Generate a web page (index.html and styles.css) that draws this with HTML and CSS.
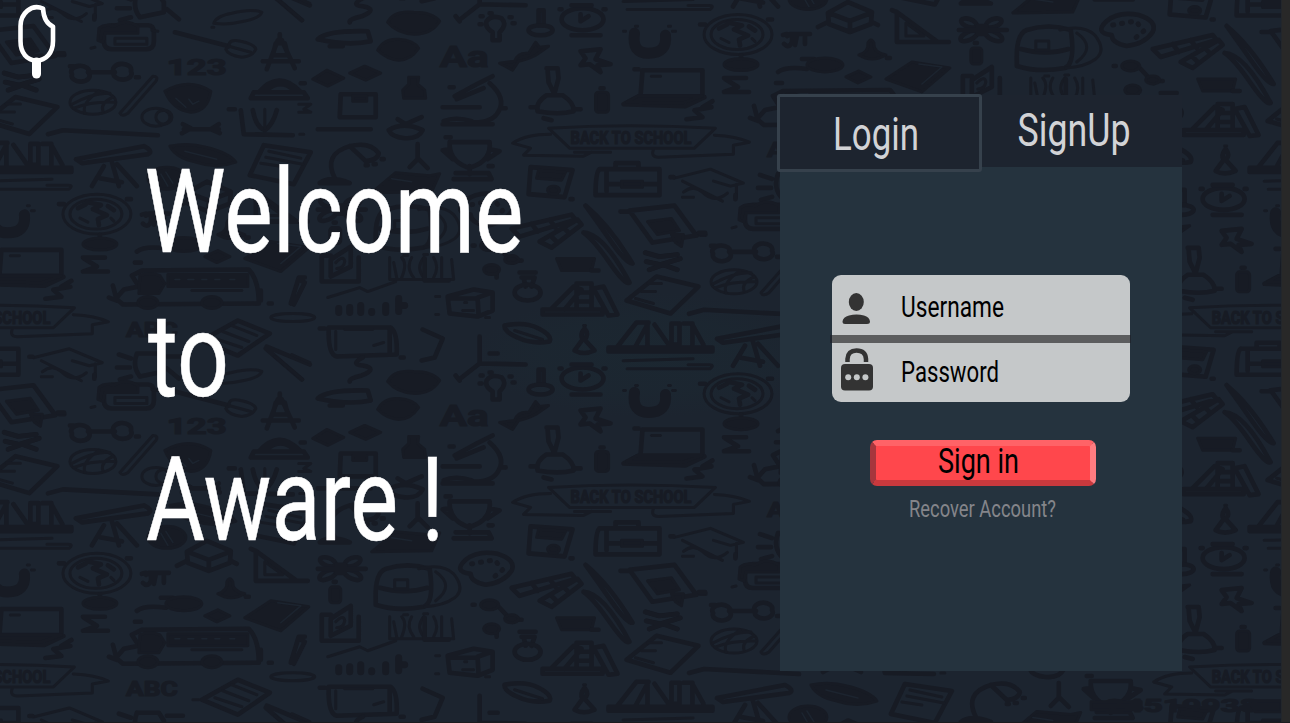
FILE: index.html
```
<!DOCTYPE html>
<html lang="en">
<head>
<meta charset="utf-8">
<title>Aware</title>
<link rel="stylesheet" href="styles.css">
</head>
<body>
<div class="page">
<svg class="backdrop" viewBox="0 0 1282 722" aria-hidden="true">
  <defs>
    <g id="tile" class="doodle">
      <path class="thick" d="M104 33q0-8 8-8h36q6 0 6 8v8q0 8-8 8h-34q-8 0-8-8z"/><path class="solid" d="M114 26q12-8 24 0v7h-33l-2 9-5-2 1-12q6-5 15-2z"/><path d="M115 38h32v6h-32zM91 48l4-1M152 30l6 1"/>
      <path class="thick" d="M175 32l54 14"/><path d="M229 46q0-8 12-5 14 3 15 8-3 7-14 8-14-2-16-8zl22 6"/>
      <path d="M214 23q2-7 18-10 20-5 30-1-2 6-18 9-16 4-30 2M212 27h2M275-3l28 23M292-5l18 8"/>
      <path class="thick" d="M280 34v8M278 40l-11 29M282 40l13 28M263 61h36M276 43h9l3 12h-15z"/>
      <path class="thick" d="M72 74a9 6 0 1 0 17-1 9 6 0 1 0-17 1M114 72a9 6 0 1 0 17-1 9 6 0 1 0-17 1M88 72h27M70 66h4M136 77h3"/>
      <ellipse cx="93" cy="102" rx="23" ry="12"/><path d="M72 104q22-12 38-11M74 108q18-7 41-6M85 113q-4-10 14-22M103 111q-3-8 10-14"/>
      <path d="M153 76q6 0 3 5l-28 32q-6 4-8 0z"/><ellipse cx="156" cy="117" rx="14" ry="9"/><ellipse cx="164" cy="117" rx="8" ry="7"/>
      <path class="solid" d="M165 91q24-14 46 0-3 20-20 21-18-2-26-21"/><path class="gap" d="M176 98l10 9M189 99l4 5 6-3"/>
      <path class="thick" d="M184 129h35M183 124l8 4-9 5M219 124l-8 5 9 4M48 134l15-4 95 5"/>
      <path class="thick" d="M251 98h57l-4-6h-50zM259 92q20-23 41-1M267 90q14-12 27 0M301 83h4M318 129h53"/>
      <path class="thick" d="M341 94h35v23h-36z"/><path class="solid" d="M353 96h14v5h-14z"/>
      <path class="thick" d="M241 110l3 24 49 1M229 109h6"/><path class="thick" d="M253 110q3 17 12 20 8-5 12-20"/><path d="M265 109v19M299 104h12l-7 5 7 3h-12M300 134h4"/>
      <path class="thick" d="M76 159l68-13q10 5 4 8l-66 9zM104 166l-12 20M112 162l7 24M117 164l20 22M100 178l22 4"/>
      <path d="M-18 181l70-2M-14 189h83q5-4-1-4H47"/>
      <ellipse cx="97" cy="214" rx="34" ry="20"/><ellipse cx="96" cy="214" rx="26" ry="15"/><path class="thick" d="M78 208l8-4M87 202l14 3-8 4 14 6-9 4 1 6M108 206l6 4M100 235v7M59 204h5M127 199h4"/><path d="M80 218l8 4M111 218l3 3"/><ellipse class="solid" cx="100" cy="244" rx="17" ry="6"/>
      <path class="solid" d="M170 146q18-4 36 1 24 6 30 15-20 7-40 0-20-4-26-16"/><path class="gap" d="M185 151l32 8"/>
      <path class="thick" d="M264 145l47 7-17 32-44-9z"/><path d="M269 151l32 7M266 157l37 7M261 163l20 3"/>
      <path class="thick" d="M335 178q-12-24 15-32M350 146l16 15q12-1 13-8-9-12-29-7M320 183q10-8 30 0zM366 165h2M374 164h2M382 159h2"/>
      <path class="thick" d="M318 39q9-9 50-8l3 10q-22 5-53-2M330 46h13"/><path class="solid" d="M388 22q6-12 26-10 19 0 26 9-8 13-25 13-18-1-27-12M378 50q6-12 21-11 15 1 20 9-8 12-20 12-12-1-21-10M313 79l14-9 17 8-16 8zM350 73l15-7 16 7-15 7z"/>
      <path class="thick" d="M363-2q-13 7 0 8 16 3-1 10-13 3-12 6"/><path class="solid" d="M409 77h10l-1 7 7 6 1 8h-22l-1-8 6-6z"/><path class="thick" d="M389 130q15-9 34 0-4 9-18 8-13-1-16-8M398 119l8 5 16-7M418 144v16M418 159l-8 8M418 158l10 10"/>
      <path class="thick" d="M4 73l14 4 18-2M5 82l14 3 20-6M8 90l14-5 14 5M58 53h6"/>
      <ellipse class="solid" cx="167" cy="178" rx="19" ry="11"/><path class="gap" d="M161 174l7 12M166 172l7 11"/>
      <g transform="translate(0 -359.5)">
        <path class="thick" d="M187 552l20-11 24 10-1 12-21 8-21-8zM188 552l21 8 21-8M209 560v11M177 566l10-5M231 561l6 3"/>
        <path class="thick" d="M256 551v30h41zM251 549l5 2M297 581h11"/><path d="M265 562v13h18z"/>
        <path class="thick" d="M142 574l4-1M146 575q6-4 5 6-3 7-8 2M149 573h20M156 574l-2 10M164 574v9"/>
        <ellipse class="thick" cx="328" cy="562" rx="8" ry="4" transform="rotate(20 328 562)"/><ellipse class="thick" cx="353" cy="562" rx="8" ry="4" transform="rotate(-20 353 562)"/><ellipse class="thick" cx="328" cy="575" rx="9" ry="4" transform="rotate(-25 328 575)"/><ellipse class="thick" cx="353" cy="575" rx="9" ry="4" transform="rotate(25 353 575)"/><path class="thick" d="M318 569h48M337 565h8v8h-8z"/>
        <path class="thick" d="M376 600q-1-27 10-31 22-7 44 0 5 34-6 38-26 5-48-2zM380 588q25 7 48 0"/><path d="M395 580h13v9h-13zM419 569q24-6 35 5 12 15 1 24-11 8-30 9M436 572q20 14 0 29"/>
        <path class="solid" d="M218 594q10-3 9-12 3-6 6 0-1 9 12 12-14 8-27 0"/><path class="thick" d="M246 597h3M334 582h2M137 611q8-6 29-3M161 598h12"/><rect class="solid" x="330" y="587" width="11" height="16" rx="3"/><ellipse class="solid" cx="184" cy="604" rx="18" ry="7"/><path class="solid" d="M205 616l13-6 12 6-13 6zM245 618l26-17 38 6-28 24z"/><path class="gap" d="M278 603l23 3-20 17"/>
        <path class="thick" d="M331 615h-9v26h37v-24M331 636v-17l20-13v20z"/><path d="M336 622q8-8 9-1-1 7-8 7M394 622l3 15M390 617v22h64l-2-20M402 617q6 6 0 20M412 617q-6 10 2 20M424 617q-8 10 0 20M434 617q6 10 0 20M442 617v20M404 615h4M424 614h4"/>
        <path class="thick" d="M83 617h22M84 618l13 8-14 5h25"/>
        <path class="thick" d="M132 635l10-5 107-1q10 10 10 34l-136 1-7-6 8-9 15-3zM135 622h6M109 657l8 3-4-15M261 650v10M269 663h3"/><path class="solid" d="M140 635q10-4 20 0l5 8-6 10h-20zM168 634h80v12h-80z"/><path class="gap" d="M175 639h5M188 639h6M202 639h5M215 639h5M230 639h5"/><path d="M192 650h50"/><ellipse class="solid" cx="148" cy="662" rx="10" ry="6"/><ellipse class="solid" cx="212" cy="662" rx="10" ry="6"/>
        <path class="thick" d="M305 637l-6 0-8 26M299 639l6 3-11 22"/><ellipse cx="293" cy="677" rx="22" ry="4"/>
        <path d="M328 657l32-10 8 4 28-10"/><path class="bars" d="M339 668v4M350 667v5M361 665v7M372 671v1M386 665v7M399 658v13M402 665h3"/>
        <path class="thick" d="M202 700l36-20 32 13-32 22z"/><path d="M223 691l26 10M232 685l25 10M215 698l27 9M193 700h6"/>
        <path class="thick" d="M329 687h62q7 5 6 27l-60 2q-9-2-8-29M320 688h5M390 688v25M401 717h3"/><path d="M336 691v18M345 689h28M374 705l10-3"/>
        <path class="thick" d="M267 706l43 18M266 708l36 31M119 714l12 4M117 727h13M120 739l11-3M137 713h22l5 8v10l-24 5q-8-10-3-23M167 716h16M167 728l12 10"/>
        <path class="solid" d="M372 552l24-20 34 3 10-2-8 18z"/><path class="gap" d="M392 538l20 3"/>
        <path class="thick" d="M466 560q12-10 32-6 19 6 14 17-8 12-26 14-15-3-15-11-18-2-5-14"/><path class="dots" d="M472 564l23-4 8 10-12 10"/>
        <path class="thick" d="M512 588l60-14 4 5-56 17zM540 601l38-22 4 5-30 23zM532 583l6 8M550 579l6 8M551 595l6 6M564 587l5 5"/>
        <path class="thick" d="M586 565q24 20 47 58-6 0-20-20T586 565M584 592q20 1 46 50-4 3-20-20T584 592M630 570l45-5 22 30-44 7zM621 571h9M701 594h5"/><path class="solid" d="M648 581l24-3 8 12-22 4zM672 594h12l-2 12-6-4z"/>
        <path class="thick" d="M473 605h2M500 608l13 14M512 620h10M497 634v3"/><ellipse class="solid" cx="490" cy="605" rx="9" ry="5"/><ellipse class="solid" cx="492" cy="629" rx="8" ry="5"/><ellipse class="solid" cx="512" cy="619" rx="7" ry="4"/>
        <path class="solid" d="M557 618h38l-3 12h-30z"/><path class="thick" d="M520 632h16M522 637h13l-3 9M524 637l2 9M425 618v22h24M592 630h7"/><ellipse class="thick" cx="528" cy="652" rx="13" ry="8"/>
        <path class="thick" d="M448 656l26-7 19 3v18l-15 6-28-3zM450 658h28l1 17M478 657l14-5"/><path d="M465 662h2M463 670h11M436 656h4M436 674h3M486 677h4"/>
        <path class="thick" d="M543 669h60v5h-60zM552 668l22-22 8 3-17 20M577 669v-26h15v26M594 648l10-2 14 28-9 1zM580 652h10M580 661h10"/>
        <path class="thick" d="M627 660l30-24 42 10-28 27z"/><path d="M648 643h14M642 651h14M636 658l18 5"/><path class="thick" d="M646 612l14 4 18-2M647 621l14 3 20-6M650 629l14-5 14 5"/>
        <path class="thick" d="M505 685q21-4 34 3 14 7 11 13-18 3-32-4-14-6-13-12"/><path d="M515 690l28 9M584 685h2"/><path class="thick" d="M585 688q5 6 0 11l10 11q-11 5-20 0l8-11q-3-5 2-11"/>
        <path class="thick" d="M609 707h104v4h-104zM618 706l19-24 12 0-13 24M640 682h8v23M655 684l14 20M672 683h8v21h-8zM684 683h9v21M694 686l10 18"/>
        <path class="thick" d="M423 689l20 9-8 19-13 3M480 696v27M462 737l18-14 46 1M490 713h8M456 735l4 5"/>
      </g>
      <path class="thick" d="M487 21q5-7 15-3 6 6-2 14v8h-7v-8q-8-5-6-11M481 16h2M480 24h2M510 17h2M513 23h2M490 13h2M539 10h5v15h-5z"/><ellipse class="thick" cx="541" cy="30" rx="12" ry="5"/>
      <ellipse class="thick" cx="583" cy="19" rx="21" ry="11"/><path class="thick" d="M572 5h20M572 35h29M581 14v7l8-5M560 9h2M604 9h2"/>
      <path class="solid" d="M500 63l15-2q3-9 14-8l7-11 4 5 9-1-13 9q-10 5-17 6l-6 9z"/><path class="thick" d="M581 51l20-2-5 10 15 5-13 1 3 7-11-8-9 1 5-7z"/>
      <path class="thick" d="M443 107h37M444 121q12-5 28 0M455 96l22-12 16-8M457 99l27-11M490 83q17 15 9 28-6 12-27 11M443 124h50M450 87h4M503 108h3"/>
      <path class="thick" d="M547 68h11l1 10-4 15M548 70l1 12 5 10M538 111q-2-9 9-16h16q12 8 11 16-15 4-36 0M535 107h-4M575 109h6M544 118l8 2M601 88h3"/><rect class="solid" x="596" y="92" width="13" height="20" rx="3"/>
      <path d="M624 31h2M636 26h2M669 26h2M673 31h3"/><path class="magnet" d="M635 33q-3 20 14 20 19 0 17-18"/>
      <path class="thick" d="M643 70h60v26h-62zM641 95l-17 9 62 2 19-9M703 72v20M713 101l-10 6M687 119l16-2-8-7 17-3M635 69h4"/><path class="solid" d="M638 96h65l-20 7-56-1z"/><path d="M652 76h9"/>
      <path d="M549 128q80-5 167 0l-21 20H570zM551 134q-25 0-38 9l18 5-7 7 60 1 8-4M715 135q22 1 35 7l-16 3v9l-75 3q-8 0-5-8M575 152h36"/>
      <path class="thick" d="M450 142h40q2 18-18 25h-5q-18-7-17-25M450 149l-7 1 10 9M490 149l10 2-12 8M470 166v8M456 173h33l3 6h-38M446 137h5M489 166h4"/>
      <path class="thick" d="M531 167l42 3-8 27-36-3z"/><path class="solid" d="M539 170l27 2-4 8-25-2z"/><ellipse class="solid" cx="554" cy="190" rx="6" ry="4"/>
      <path class="thick" d="M600 169h60v26h-64q0-23 4-26M609 184h50M616 168v-5h23v4M607 171v20M571 199h2"/><path class="solid" d="M622 181h21v6h-21z"/>
      <path d="M675 178l36-9 33 14-13 3-17-5M683 181l40 20M684 192q10-8 19 0 12 12 25 1M737 184v13M683 197h11"/><path class="thick" d="M736 195v4M674 177h-3"/>
      <text class="scribble" x="167" y="75" font-size="23" textLength="60" lengthAdjust="spacingAndGlyphs">123</text>
      <text class="scribble" x="440" y="67" font-size="30" textLength="49" lengthAdjust="spacingAndGlyphs">Aa</text>
      <text class="scribble" x="126" y="337" font-size="20" textLength="52" lengthAdjust="spacingAndGlyphs">ABC</text>
      <text class="scribble" x="571" y="144" font-size="18" textLength="121" lengthAdjust="spacingAndGlyphs">BACK TO SCHOOL</text>
    </g>
    <g id="column"><use href="#tile" y="-359.5"/><use href="#tile"/><use href="#tile" y="359.5"/><use href="#tile" y="719"/></g>
    <radialGradient id="smudge"><stop offset="0" stop-color="#1b2932" stop-opacity=".55"/><stop offset=".6" stop-color="#1b2932" stop-opacity=".4"/><stop offset="1" stop-color="#1b2932" stop-opacity="0"/></radialGradient>
  </defs>
  <ellipse cx="650" cy="355" rx="175" ry="62" fill="url(#smudge)"/>
  <use href="#column" x="-641.6" y="-179.75"/>
  <use href="#column"/>
  <use href="#column" x="641.6" y="-179.75"/>
  <use href="#column" x="1283.2"/>
  <g class="doodle"><path class="solid" d="M1092 702h50v8h-50zM1250 701h32v11h-26z"/><text class="scribble" x="1106" y="712" font-size="19" textLength="154" lengthAdjust="spacingAndGlyphs">24519938</text></g>
</svg>

<main class="layout">
  <section class="hero">
    <svg class="logo" viewBox="0 0 60 82" aria-label="Aware logo"><path d="M43 8.500C31 3.500 20.500 14 20.500 26V41C20.500 53 27 60.500 36.500 60.500S53 53 53 41V26.500C46 23.500 43.500 17 43 8.500Z" class="logo-pop"/><path d="M36.500 62V74" class="logo-stick"/></svg>
    <svg class="headline" viewBox="0 0 420 410" role="heading" aria-level="1">
      <text x="4.500" y="102" textLength="379" lengthAdjust="spacingAndGlyphs">Welcome</text>
      <text x="8" y="246" textLength="81" lengthAdjust="spacingAndGlyphs">to</text>
      <text x="6" y="390" textLength="298" lengthAdjust="spacingAndGlyphs">Aware !</text>
    </svg>
  </section>

  <section class="card">
    <nav class="tabs">
      <a class="tab tab-active"><svg viewBox="0 0 199 72"><text x="53" y="53" textLength="86" lengthAdjust="spacingAndGlyphs">Login</text></svg></a>
      <a class="tab"><svg viewBox="0 0 200 72"><text x="35.500" y="51" textLength="113" lengthAdjust="spacingAndGlyphs">SignUp</text></svg></a>
    </nav>
    <form class="form">
      <div class="fields">
        <label class="field">
          <svg viewBox="0 0 298 60"><ellipse cx="24.300" cy="27" rx="7.500" ry="9"/><path d="M10.500 46.500Q11 42 17 40.500Q24.500 38.500 32 40.500Q37.500 42 38 46.500Q38 49 35 49H13Q10.500 49 10.500 46.500Z"/><text x="69" y="42" textLength="103" lengthAdjust="spacingAndGlyphs">Username</text></svg>
        </label>
        <div class="divider"></div>
        <label class="field">
          <svg viewBox="0 0 298 59"><path class="shackle" d="M15.500 19V16Q16 7.500 24.500 7.500Q33.500 7.500 34 16V19"/><rect x="9" y="21" width="32" height="26.500" rx="4"/><g class="pin"><circle cx="16.200" cy="34.300" r="3"/><circle cx="24.800" cy="34.300" r="3"/><circle cx="33.400" cy="34.300" r="3"/></g><text x="69" y="39" textLength="98" lengthAdjust="spacingAndGlyphs">Password</text></svg>
        </label>
      </div>
      <button class="submit" type="button"><svg viewBox="0 0 226 46"><text x="68" y="33" textLength="81" lengthAdjust="spacingAndGlyphs">Sign in</text></svg></button>
      <a class="recover"><svg viewBox="0 0 160 30"><text x="6" y="22" textLength="147" lengthAdjust="spacingAndGlyphs">Recover Account?</text></svg></a>
    </form>
  </section>
</main>
</div>
</body>
</html>
```

FILE: styles.css
```
* { box-sizing: border-box; }
body { margin: 0; background: #282828; overflow: hidden; font-family: Roboto, "Liberation Sans", sans-serif; }
svg { display: block; }
svg text { font-family: Roboto, "Liberation Sans", sans-serif; }

.page { position: relative; width: 1290px; height: 723px; background: #282828; border-bottom: 1.500px solid #1b1b1e; overflow: hidden; }
.backdrop { position: absolute; left: 0; top: 0; width: 1282px; height: 722px; background: #1c242f; border-right: 1px solid #22262b; }

.doodle { fill: none; stroke: #171b24; stroke-width: 3; stroke-linecap: round; stroke-linejoin: round; }
.doodle .thick { stroke-width: 4.600; }
.doodle .solid { fill: #171b24; }
.doodle .gap { stroke: #1c242f; stroke-width: 1.500; }
.doodle .bars { stroke-width: 7; }
.doodle .magnet { stroke-width: 11; }
.doodle .dots { stroke-width: 5; stroke-dasharray: 1 8; }
.doodle .scribble { fill: #171b24; stroke-width: 1.200; font-weight: 700; }

.layout { position: relative; display: flex; width: 1282px; height: 722px; }
.hero { width: 780px; }
.logo { width: 60px; height: 82px; fill: none; stroke: #fff; }
.logo-pop { stroke-width: 4.600; stroke-linejoin: round; }
.logo-stick { stroke-width: 9; stroke-linecap: round; }
.headline { width: 420px; height: 410px; margin: 68px 0 0 140px; fill: #fff; stroke: #fff; stroke-width: .5; overflow: visible; }
.headline text { font-size: 117px; }

.card { display: flex; flex-direction: column; width: 402px; height: 576px; margin-top: 95px; background: #25333e; }
.tabs { display: flex; height: 72px; background: #1d242f; }
.tab { width: 200px; height: 72px; fill: #d2d3d6; }
.tab svg { width: 200px; height: 72px; }
.tab text { font-size: 46.500px; }
.tab-active { width: 205px; height: 78px; margin: -1px 0 0 -3px; flex-shrink: 0; background: #1d242f; border: 3px solid #36414c; border-radius: 3px; }
.tab-active svg { width: 199px; }

.form { display: flex; flex-direction: column; align-items: center; padding-top: 108px; }
.fields { width: 298px; height: 127px; background: #c5c8c9; border-radius: 9px; }
.field { display: block; fill: #333; }
.field svg { width: 298px; }
.field text { font-size: 29.500px; fill: #000; }
.divider { height: 8px; margin: 0 -1px 0 -2px; background: #5c5d5e; border: solid #20262f; border-width: 0 1px 0 2px; }
.shackle { fill: none; stroke: #333; stroke-width: 4.500; }
.pin { fill: #c5c8c9; }

.submit { width: 226px; height: 46px; margin: 38px 0 0 4px; padding: 0; background: #ff474c; border: 6px solid; border-color: #ff6367 #ff7c80 #c9393d #a6363d; border-radius: 7px; }
.submit svg { width: 226px; height: 46px; margin: -6px; fill: #000; }
.submit text { font-size: 34.500px; }
.recover { display: block; width: 160px; height: 30px; margin: 9px 0 0 4px; fill: #84858a; }
.recover svg { width: 160px; height: 30px; overflow: visible; }
.recover text { font-size: 23.500px; }
```
